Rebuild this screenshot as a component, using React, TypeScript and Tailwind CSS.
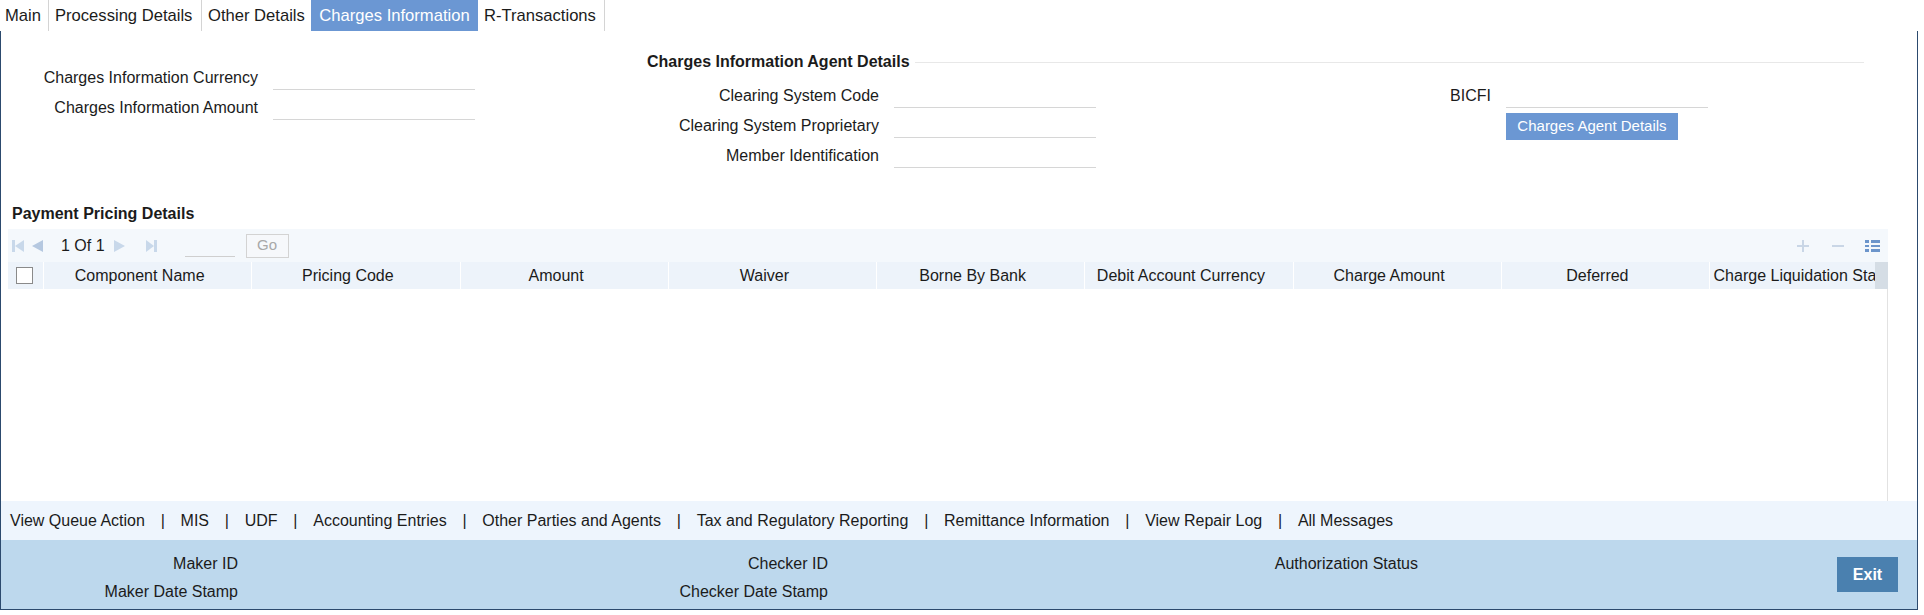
import React from "react";

function Field({ label, labelW, inputW = "w-[202px]" }: { label: string; labelW: string; inputW?: string }) {
  return (
    <div className="flex items-center h-[30px]">
      <div className={`${labelW} shrink-0 text-right whitespace-nowrap`}>{label}</div>
      <div className={`ml-[15px] ${inputW} h-[24px] border-b border-[#d6d6d6]`} />
    </div>
  );
}

const cols = [
  "Component Name",
  "Pricing Code",
  "Amount",
  "Waiver",
  "Borne By Bank",
  "Debit Account Currency",
  "Charge Amount",
  "Deferred",
  "Charge Liquidation Status",
];

const links = [
  "View Queue Action",
  "MIS",
  "UDF",
  "Accounting Entries",
  "Other Parties and Agents",
  "Tax and Regulatory Reporting",
  "Remittance Information",
  "View Repair Log",
  "All Messages",
];

export default function App() {
  return (
    <div className="w-[1924px] h-[615px] bg-white font-['Liberation_Sans',Arial,sans-serif] text-[16px] text-[#1b1b1b] overflow-hidden">
      {/* Tabs */}
      <div className="flex h-[31px] text-[16.6px] leading-[31px] whitespace-nowrap">
        <div className="w-[49px] pl-[5px] border-r border-[#d4d4d4]">Main</div>
        <div className="w-[153px] pl-[6px] border-r border-[#d4d4d4]">Processing Details</div>
        <div className="w-[109px] pl-[6px]">Other Details</div>
        <div className="w-[167px] text-center bg-[#6b97d3] text-white">Charges Information</div>
        <div className="w-[127px] pl-[6px] border-r border-[#d4d4d4]">R-Transactions</div>
      </div>

      {/* Frame */}
      <div className="w-[1918px] h-[579px] border-l border-r border-b border-[#2c4a6e] flex flex-col">
        {/* Top fields */}
        <div className="flex h-[174px] shrink-0">
          <div className="w-[646px] shrink-0 pt-[32px]">
            <Field label="Charges Information Currency" labelW="w-[257px]" />
            <Field label="Charges Information Amount" labelW="w-[257px]" />
          </div>
          <div className="w-[1217px] shrink-0 pt-[22px]">
            <div className="flex items-center h-[18px]">
              <span className="font-bold whitespace-nowrap">Charges Information Agent Details</span>
              <div className="flex-1 h-px bg-[#e8e8e8] ml-[5px]" />
            </div>
            <div className="flex mt-[10px]">
              <div>
                <Field label="Clearing System Code" labelW="w-[232px]" />
                <Field label="Clearing System Proprietary" labelW="w-[232px]" />
                <Field label="Member Identification" labelW="w-[232px]" />
              </div>
              <div>
                <Field label="BICFI" labelW="w-[395px]" />
                <div className="ml-[410px] mt-[2px] w-[172px] h-[27px] bg-[#6b97d3] text-white text-[15px] flex items-center justify-center whitespace-nowrap">
                  Charges Agent Details
                </div>
              </div>
            </div>
          </div>
        </div>

        {/* Payment Pricing heading */}
        <div className="h-[18px] leading-[18px] pl-[11px] font-bold shrink-0">Payment Pricing Details</div>

        {/* Table */}
        <div className="ml-[7px] mt-[6px] w-[1880px] shrink-0">
          <div className="h-[33px] bg-[#f4f8fc] flex items-center">
            <div className="ml-[4px] flex items-center">
              <svg width="12" height="14" viewBox="0 0 12 14">
                <rect x="0" y="1" width="3" height="12" fill="#c8d8ea" />
                <polygon points="12,1 3,7 12,13" fill="#c8d8ea" />
              </svg>
            </div>
            <div className="ml-[8px] flex items-center">
              <svg width="11" height="14" viewBox="0 0 11 14">
                <polygon points="11,1 0,7 11,13" fill="#b5c8e0" />
              </svg>
            </div>
            <div className="ml-[18px] whitespace-nowrap">1 Of 1</div>
            <div className="ml-[9px] flex items-center">
              <svg width="11" height="14" viewBox="0 0 11 14">
                <polygon points="0,1 11,7 0,13" fill="#c8d8ea" />
              </svg>
            </div>
            <div className="ml-[21px] flex items-center">
              <svg width="11" height="14" viewBox="0 0 11 14">
                <polygon points="0,1 8,7 0,13" fill="#c8d8ea" />
                <rect x="8" y="1" width="3" height="12" fill="#c8d8ea" />
              </svg>
            </div>
            <div className="ml-[28px] w-[50px] h-[22px] border-b border-[#cfcfcf]" />
            <div className="ml-[11px] w-[43px] h-[24px] border border-[#d3d3d3] bg-[#f6f8fb] text-[#a8a8a8] text-[15px] flex items-center justify-center">
              Go
            </div>
            <div className="ml-auto flex items-center mr-[8px]">
              <svg width="12" height="12" viewBox="0 0 12 12">
                <rect x="5" y="0" width="2" height="12" fill="#c9d6e6" />
                <rect x="0" y="5" width="12" height="2" fill="#c9d6e6" />
              </svg>
              <svg className="ml-[23px]" width="12" height="12" viewBox="0 0 12 12">
                <rect x="0" y="5" width="12" height="2" fill="#c9d6e6" />
              </svg>
              <svg className="ml-[21px]" width="15" height="14" viewBox="0 0 15 14">
                <rect x="0" y="1" width="4" height="3" fill="#6c95cb" />
                <rect x="6" y="1" width="9" height="3" fill="#6c95cb" />
                <rect x="0" y="6" width="4" height="2" fill="#6c95cb" />
                <rect x="6" y="6" width="9" height="2" fill="#6c95cb" />
                <rect x="0" y="10" width="4" height="3" fill="#6c95cb" />
                <rect x="6" y="10" width="9" height="3" fill="#6c95cb" />
              </svg>
            </div>
          </div>
          <div className="h-[27px] bg-[#edf3fa] flex">
            <div className="flex-1 flex overflow-hidden">
              <div className="w-[35px] shrink-0 flex items-center">
                <div className="ml-[8px] w-[17px] h-[17px] border border-[#8a8a8a] bg-white" />
              </div>
              {cols.map((c) => (
                <div
                  key={c}
                  className="w-[208.25px] shrink-0 border-l border-white text-center pr-[16px] leading-[28px] whitespace-nowrap overflow-hidden"
                >
                  {c}
                </div>
              ))}
            </div>
            <div className="w-[13px] shrink-0 bg-[#d5dde5]" />
          </div>
          <div className="h-[212px] bg-white border-r border-[#e2e2e2]" />
        </div>

        {/* Link bar */}
        <div className="h-[39px] bg-[#eef5fd] flex items-center pl-[9px] whitespace-nowrap shrink-0">
          {links.map((l, i) => (
            <React.Fragment key={l}>
              {i > 0 && <span className="mx-[15.75px]">|</span>}
              <span>{l}</span>
            </React.Fragment>
          ))}
        </div>

        {/* Footer */}
        <div className="h-[69px] bg-[#bdd8ed] flex shrink-0">
          <div className="w-[237px] shrink-0 pt-[10px] text-right">
            <div className="h-[28px] leading-[28px]">Maker ID</div>
            <div className="h-[28px] leading-[28px] whitespace-nowrap">Maker Date Stamp</div>
          </div>
          <div className="w-[590px] shrink-0 pt-[10px] text-right">
            <div className="h-[28px] leading-[28px]">Checker ID</div>
            <div className="h-[28px] leading-[28px] whitespace-nowrap">Checker Date Stamp</div>
          </div>
          <div className="w-[590px] shrink-0 pt-[10px] text-right">
            <div className="h-[28px] leading-[28px] whitespace-nowrap">Authorization Status</div>
          </div>
          <div className="ml-auto mr-[19px] self-center w-[61px] h-[35px] bg-[#4a80af] text-white font-bold flex items-center justify-center">
            Exit
          </div>
        </div>
      </div>
    </div>
  );
}
